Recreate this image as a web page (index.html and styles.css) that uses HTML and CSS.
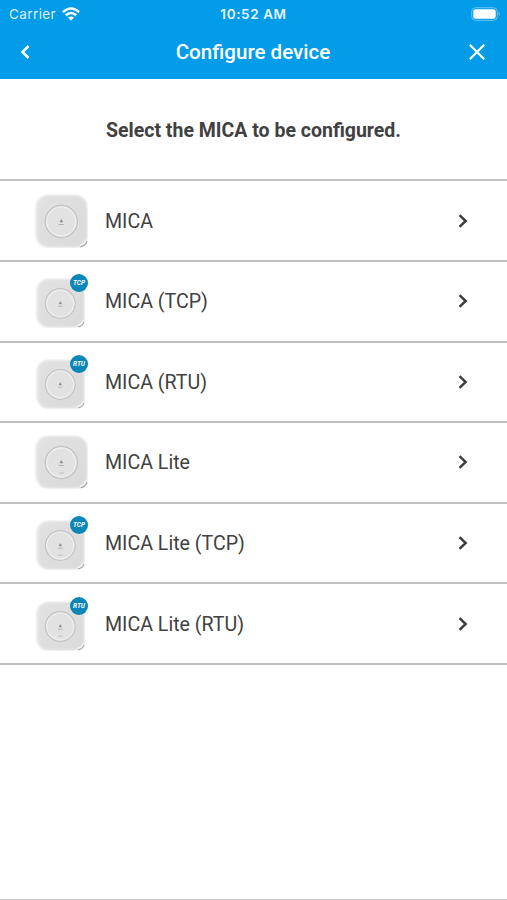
FILE: index.html
```html
<!DOCTYPE html>
<html lang="en">
<head>
  <meta charset="UTF-8">
  <meta name="viewport" content="width=device-width, initial-scale=1.0">
  <title>Configure device</title>
  <link rel="stylesheet" href="styles.css">
</head>
<body>
  <!-- Shared drawings -->
  <svg class="defs" width="0" height="0">
    <defs>
      <linearGradient id="shell" x1="0" y1="0" x2="1" y2="1">
        <stop offset="0" stop-color="#e2e2e2"/>
        <stop offset="1" stop-color="#dadada"/>
      </linearGradient>
      <filter id="soft" x="-10%" y="-10%" width="120%" height="120%">
        <feGaussianBlur stdDeviation="0.9"/>
      </filter>
    </defs>
    <symbol id="device" viewBox="0 0 54 54">
      <rect x="1.500" y="1" width="52" height="52.500" rx="13" fill="#e6e6e6" filter="url(#soft)"/>
      <path d="M17 2H40Q52.500 2 52.500 15V45Q51 51 45 52.500H17Q4 52.500 4 40V15Q4 2 17 2Z" fill="url(#shell)" filter="url(#soft)"/>
      <path d="M46 51.300Q51 50.300 52 45.500" fill="none" stroke="#f4f4f4" stroke-width="1.800"/>
      <path d="M46.500 52.800Q51.800 51.800 53 47" fill="none" stroke="#a6a6a6" stroke-width="1.100"/>
      <circle cx="27.300" cy="27.500" r="16" fill="#e2e2e2" stroke="#c3c3c3" stroke-width="1.300"/>
      <circle cx="27.300" cy="27.500" r="14.500" fill="none" stroke="#ededed" stroke-width="1.400"/>
      <path d="M27.300 25.500L28.600 28H26Z" fill="#888" stroke="#888" stroke-width=".5"/>
      <path d="M24.800 30.500H29.800" stroke="#b2b2b2" stroke-width="1"/>
    </symbol>
    <symbol id="device-lite" viewBox="0 0 54 54">
      <use href="#device" width="54" height="54"/>
      <path d="M25.300 38H29.800" stroke="#bdbdbd" stroke-width="1"/>
    </symbol>
    <symbol id="next" viewBox="0 0 12 16">
      <path d="M2.500 2.200L8.700 8L2.500 13.800" fill="none" stroke="#3c3c3c" stroke-width="2.400"/>
    </symbol>
  </svg>

  <div class="screen">
    <header class="header">
      <div class="status">
        <div class="carrier">
          <span>Carrier</span>
          <svg width="18" height="14" viewBox="0 0 18 14">
            <g fill="none" stroke="#fff" stroke-width="2.500">
              <path d="M.9 5.100Q9 -2.100 17.100 5.100"/>
              <path d="M3.800 8.200Q9 3.800 14.200 8.200"/>
            </g>
            <path d="M6 10.600Q9 8.200 12 10.600L9 13.700Z" fill="#fff"/>
          </svg>
        </div>
        <div class="time">10:52 AM</div>
        <div class="battery">
          <svg width="30" height="14" viewBox="0 0 30 14">
            <rect x=".7" y=".7" width="25.600" height="12.600" rx="3.800" fill="none" stroke="#6cc5f2" stroke-width="1"/>
            <rect x="2.300" y="2.300" width="22.400" height="9.400" rx="2.200" fill="#fff"/>
            <path d="M27.700 4.800Q30 7 27.700 9.200Z" fill="#6cc5f2"/>
          </svg>
        </div>
      </div>
      <div class="navbar">
        <svg width="12" height="16" viewBox="0 0 12 16"><path d="M9.500 2L3.500 8L9.500 14" fill="none" stroke="#fff" stroke-width="2.500"/></svg>
        <h1>Configure device</h1>
        <svg width="18" height="18" viewBox="0 0 18 18"><path d="M1.800 1.800L16.200 16.200M16.200 1.800L1.800 16.200" fill="none" stroke="#fff" stroke-width="2.200"/></svg>
      </div>
    </header>

    <p class="intro">Select the MICA to be configured.</p>

    <ul class="devices">
      <li class="device">
        <div class="thumb"><svg class="picture"><use href="#device"/></svg></div>
        <span class="name">MICA</span>
        <svg class="next"><use href="#next"/></svg>
      </li>
      <li class="device">
        <div class="thumb">
          <svg class="picture small"><use href="#device"/></svg>
          <span class="badge">TCP</span>
        </div>
        <span class="name">MICA (TCP)</span>
        <svg class="next"><use href="#next"/></svg>
      </li>
      <li class="device">
        <div class="thumb">
          <svg class="picture small"><use href="#device"/></svg>
          <span class="badge">RTU</span>
        </div>
        <span class="name">MICA (RTU)</span>
        <svg class="next"><use href="#next"/></svg>
      </li>
      <li class="device">
        <div class="thumb"><svg class="picture"><use href="#device-lite"/></svg></div>
        <span class="name">MICA Lite</span>
        <svg class="next"><use href="#next"/></svg>
      </li>
      <li class="device">
        <div class="thumb">
          <svg class="picture small"><use href="#device-lite"/></svg>
          <span class="badge">TCP</span>
        </div>
        <span class="name">MICA Lite (TCP)</span>
        <svg class="next"><use href="#next"/></svg>
      </li>
      <li class="device">
        <div class="thumb">
          <svg class="picture small"><use href="#device-lite"/></svg>
          <span class="badge">RTU</span>
        </div>
        <span class="name">MICA Lite (RTU)</span>
        <svg class="next"><use href="#next"/></svg>
      </li>
    </ul>
  </div>
</body>
</html>
```
FILE: styles.css
```css
* {
  box-sizing: border-box;
}
body {
  margin: 0;
  font-family: Roboto, sans-serif;
  color: #414141;
  background-color: #fff;
}
.defs {
  position: absolute;
}
.screen {
  height: 900px;
  overflow: hidden;
  border-bottom: 1px solid #c8c8c8;
}
.header {
  height: 79px;
  color: #fff;
  background-color: #039ce8;
}
.status {
  display: grid;
  grid-template-columns: 1fr auto 1fr;
  align-items: center;
  height: 27px;
  padding: 0 9px;
  font-family: Inter, sans-serif;
  font-size: 13.5px;
}
.carrier {
  display: flex;
  align-items: center;
  gap: 6px;
  color: #d9f0fc;
  letter-spacing: 0.4px;
}
.time {
  font-weight: 600;
  letter-spacing: 0.6px;
  color: #e6f5fd;
}
.battery {
  display: flex;
  justify-content: flex-end;
  margin-right: -3px;
}
.navbar {
  display: flex;
  align-items: center;
  justify-content: space-between;
  height: 50px;
  padding: 0 21px 0 19px;
}
h1 {
  margin: 0 0 0 7px;
  font-size: 20.6px;
  font-weight: 500;
}
.intro {
  margin: 0;
  height: 100.4px;
  line-height: 103px;
  text-align: center;
  font-size: 19.5px;
  font-weight: 700;
}
.devices {
  margin: 0;
  padding: 0;
  list-style: none;
  border-top: 2px solid #c0c0c0;
}
.device {
  display: flex;
  align-items: center;
  height: 80.6px;
  padding: 0 38px 0 34px;
  border-bottom: 2px solid #c0c0c0;
}
.thumb {
  position: relative;
  width: 54px;
  height: 54px;
  margin-right: 17px;
}
.picture {
  display: block;
  width: 54px;
  height: 54px;
}
.picture.small {
  width: 50px;
  height: 50px;
  margin: 4px 0 0 1px;
}
.badge {
  position: absolute;
  top: 0;
  right: 0;
  width: 18px;
  height: 18px;
  border-radius: 50%;
  background-color: #0b86b8;
  color: #fff;
  font-size: 6.5px;
  font-weight: 700;
  font-style: italic;
  line-height: 18px;
  text-align: center;
}
.name {
  flex: 1;
  padding-top: 1px;
  font-size: 19.6px;
}
.next {
  width: 12px;
  height: 16px;
}
```
